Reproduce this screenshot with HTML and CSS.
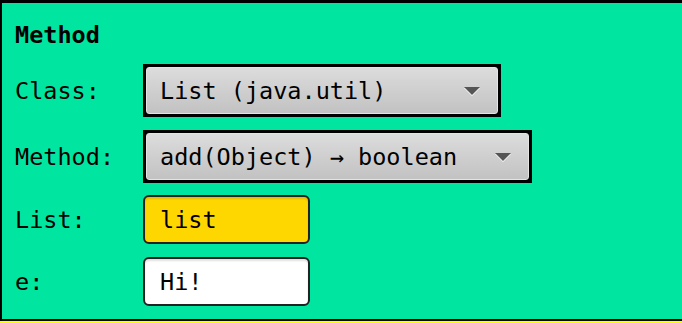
FILE: index.html
```html
<html>
<head>
<title>Method</title>
<link rel="stylesheet" href="styles.css">
</head>
<body>
<div class="panel">
  <div class="title">Method</div>
  <div class="row row-class">
    <span class="label">Class:</span>
    <div class="select sel-class"><span class="face"><span class="val">List (java.util)</span><span class="arrow"></span></span></div>
  </div>
  <div class="row row-method">
    <span class="label">Method:</span>
    <div class="select sel-method"><span class="face"><span class="val">add(Object) &#8594; boolean</span><span class="arrow"></span></span></div>
  </div>
  <div class="row row-list">
    <span class="label">List:</span>
    <div class="field field-list">list</div>
  </div>
  <div class="row row-e">
    <span class="label">e:</span>
    <div class="field">Hi!</div>
  </div>
</div>
</body>
</html>
```

FILE: styles.css
```css
html, body { margin:0; padding:0; }
body { background:#ffff00; overflow:hidden; font-family:"DejaVu Sans Mono", "Liberation Mono", monospace; font-size:23.5px; color:#000; }

.panel { box-sizing:border-box; height:321px; width:700px; background:#00e6a0; border-style:solid; border-color:#000; border-width:3px 0 2px 2px; padding:0 0 0 13px; }

.title { font-weight:bold; height:61px; line-height:26px; padding-top:19px; box-sizing:border-box; }

.row { display:flex; align-items:center; }
.label { width:128px; }
.row-method { margin-top:13px; }
.row-list { margin-top:12px; }
.row-e { margin-top:13px; }

.select { box-sizing:border-box; height:53px; border:3px solid #000; background:#000; display:flex; }
.sel-class { width:358px; }
.sel-method { width:389px; }
.face { flex:1; display:flex; align-items:center; justify-content:space-between; border:1px solid #e4e4e4; border-radius:3px; background:linear-gradient(#dcdcdc, #c2c2c2); padding:0 17px 0 13px; }
.arrow { width:0; height:0; border-left:8px solid transparent; border-right:8px solid transparent; border-top:8px solid #555; filter:drop-shadow(0 1px 0 #fff); }

.field { box-sizing:border-box; width:167px; height:49px; border:2px solid #222; border-radius:6px; background:#fff; box-shadow:inset 0 2px 2px rgba(0,0,0,0.12); padding-left:15px; display:flex; align-items:center; }
.field-list { background:#ffd700; }
```
